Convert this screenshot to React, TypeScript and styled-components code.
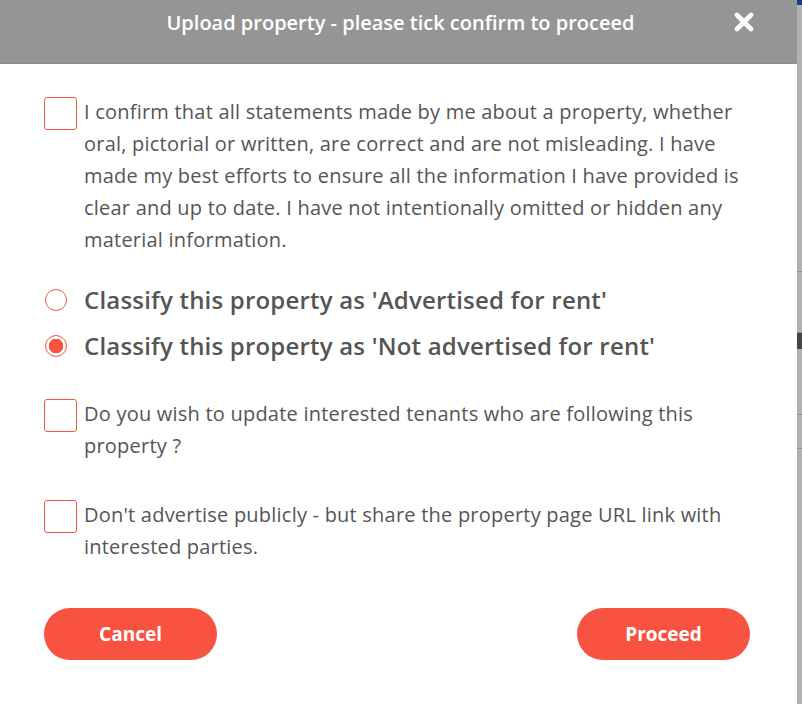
import React, { useState } from "react";
import styled, { createGlobalStyle } from "styled-components";

const GlobalStyle = createGlobalStyle`
  html, body {
    margin: 0;
    padding: 0;
    background: #b2b2b2;
  }
  * {
    box-sizing: border-box;
  }
`;

const ACCENT = "#f85340";
const TEXT = "#555555";
const FONT = `"Open Sans", "Noto Sans", sans-serif`;

const checks = [
  "I confirm that all statements made by me about a property, whether oral, pictorial or written, are correct and are not misleading. I have made my best efforts to ensure all the information I have provided is clear and up to date. I have not intentionally omitted or hidden any material information.",
  "Do you wish to update interested tenants who are following this property ?",
  "Don't advertise publicly - but share the property page URL link with interested parties.",
];

const App: React.FC = () => {
  const [ticked, setTicked] = useState<boolean[]>([false, false, false]);
  const [classify, setClassify] = useState("not");

  const toggle = (i: number) =>
    setTicked((prev) => prev.map((v, j) => (j === i ? !v : v)));

  return (
    <>
      <GlobalStyle />
      <Page>
        <Modal>
          <Header>
            <span />
            <Title>Upload property - please tick confirm to proceed</Title>
            <Close aria-label="close">
              <svg width="20" height="20" viewBox="0 0 20 20">
                <path
                  d="M3 3 L17 17 M17 3 L3 17"
                  stroke="#fff"
                  strokeWidth="4.6"
                  strokeLinecap="round"
                />
              </svg>
            </Close>
          </Header>

          <Body>
            <CheckRow $mt={0} onClick={() => toggle(0)}>
              <Box $on={ticked[0]} />
              <CheckText>{checks[0]}</CheckText>
            </CheckRow>

            <RadioGroup>
              <RadioRow onClick={() => setClassify("adv")}>
                <Radio $on={classify === "adv"} />
                <RadioText>Classify this property as 'Advertised for rent'</RadioText>
              </RadioRow>
              <RadioRow onClick={() => setClassify("not")}>
                <Radio $on={classify === "not"} />
                <RadioText>Classify this property as 'Not advertised for rent'</RadioText>
              </RadioRow>
            </RadioGroup>

            <CheckRow $mt={34} onClick={() => toggle(1)}>
              <Box $on={ticked[1]} />
              <CheckText>{checks[1]}</CheckText>
            </CheckRow>

            <CheckRow $mt={37} onClick={() => toggle(2)}>
              <Box $on={ticked[2]} />
              <CheckText>{checks[2]}</CheckText>
            </CheckRow>

            <Actions>
              <Button>Cancel</Button>
              <Button>Proceed</Button>
            </Actions>
          </Body>
        </Modal>

        <Backdrop>
          <NavCorner />
          <Rule $top={266} />
          <Rule $top={60} />
          <Handle />
          <Rule $top={65} />
          <Rule $top={33} />
        </Backdrop>
      </Page>
    </>
  );
};

export default App;

const Page = styled.div`
  display: flex;
  width: 802px;
  height: 704px;
  overflow: hidden;
`;

const Modal = styled.div`
  width: 797px;
  height: 704px;
  background: #fff;
  display: flex;
  flex-direction: column;
  font-family: ${FONT};
`;

const Header = styled.div`
  height: 64px;
  flex-shrink: 0;
  background: #959595;
  border-bottom: 1px solid #8c8c8c;
  display: grid;
  grid-template-columns: 1fr auto 1fr;
  align-items: start;
  padding: 9px 43px 0 47px;
`;

const Title = styled.h2`
  margin: 0;
  color: #fff;
  font-size: 20px;
  font-weight: 600;
  line-height: 28px;
  letter-spacing: 0;
`;

const Close = styled.button`
  justify-self: end;
  margin-top: 3px;
  width: 20px;
  height: 20px;
  padding: 0;
  border: none;
  background: none;
  cursor: pointer;
  display: flex;
`;

const Body = styled.div`
  padding: 32px 47px 0 44px;
  display: flex;
  flex-direction: column;
`;

const CheckRow = styled.label<{ $mt: number }>`
  display: flex;
  align-items: flex-start;
  gap: 7px;
  margin-top: ${({ $mt }) => $mt}px;
  cursor: pointer;
`;

const Box = styled.span<{ $on: boolean }>`
  flex-shrink: 0;
  width: 33px;
  height: 33px;
  margin-top: 1px;
  border: 1.5px solid ${ACCENT};
  border-radius: 3px;
  background: ${({ $on }) => ($on ? ACCENT : "#fff")};
`;

const CheckText = styled.span`
  color: ${TEXT};
  font-size: 20px;
  line-height: 32px;
  letter-spacing: 0.22px;
`;

const RadioGroup = styled.div`
  margin-top: 26px;
  display: flex;
  flex-direction: column;
  gap: 10px;
`;

const RadioRow = styled.label`
  display: flex;
  align-items: center;
  gap: 17px;
  height: 36px;
  padding-left: 1px;
  cursor: pointer;
`;

const Radio = styled.span<{ $on: boolean }>`
  flex-shrink: 0;
  width: 22px;
  height: 22px;
  border-radius: 50%;
  border: 1.5px solid ${ACCENT};
  background: ${({ $on }) =>
    $on ? `radial-gradient(circle, ${ACCENT} 0 7px, #fff 7.5px)` : "#fff"};
`;

const RadioText = styled.span`
  color: ${TEXT};
  font-size: 24px;
  font-weight: 600;
  line-height: 36px;
  letter-spacing: 0.2px;
`;

const Actions = styled.div`
  margin-top: 45px;
  display: flex;
  justify-content: space-between;
`;

const Button = styled.button`
  width: 173px;
  height: 52px;
  border: none;
  border-radius: 26px;
  background: ${ACCENT};
  color: #fff;
  font-family: ${FONT};
  font-size: 19px;
  font-weight: 700;
  cursor: pointer;
`;

const Backdrop = styled.div`
  flex: 1;
  background: #b2b2b2;
  display: flex;
  flex-direction: column;
`;

const NavCorner = styled.div`
  height: 5px;
  background: #1c3a8a;
`;

const Rule = styled.div<{ $top: number }>`
  margin-top: ${({ $top }) => $top}px;
  height: 1px;
  background: #8f8f8f;
`;

const Handle = styled.div`
  margin-top: 0;
  height: 16px;
  background: #444;
`;
